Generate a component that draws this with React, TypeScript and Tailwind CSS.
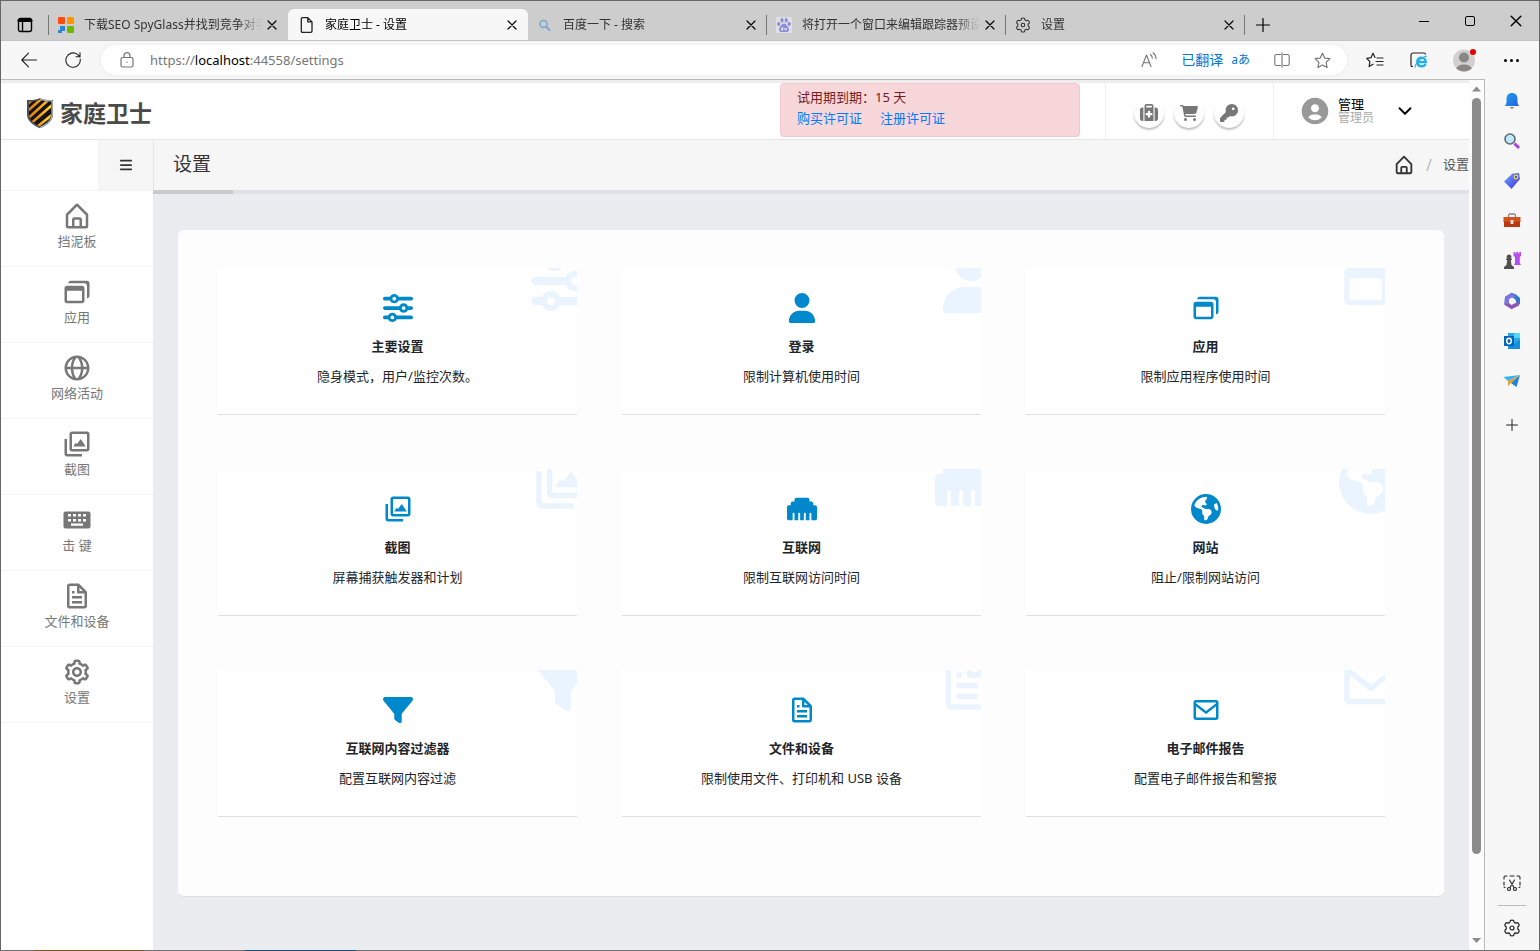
// src/App.tsx
import type { ReactNode } from "react";
import type { IconType } from "react-icons";
import { BiCog, BiEnvelope, BiFile, BiGlobe, BiImages, BiSolidUserCircle, BiWindows } from "react-icons/bi";
import {
  FaBars,
  FaCartShopping,
  FaEarthAmericas,
  FaEthernet,
  FaFilter,
  FaKey,
  FaSliders,
  FaSuitcaseMedical,
  FaUser,
} from "react-icons/fa6";
import { ChevronDown } from "lucide-react";

type IconProps = { className?: string };

const line = {
  fill: "none",
  stroke: "currentColor",
  strokeLinecap: "round" as const,
  strokeLinejoin: "round" as const,
};

const HomeIcon = ({ className }: IconProps) => (
  <svg viewBox="0 0 24 24" className={className} fill="currentColor" aria-hidden="true">
    <path d="M5 22h14a2 2 0 0 0 2-2v-9a1 1 0 0 0-.29-.71l-8-8a1 1 0 0 0-1.41 0l-8 8A1 1 0 0 0 3 11v9a2 2 0 0 0 2 2zm5-2v-5h4v5zm-5-8.59 7-7 7 7V20h-3v-5a2 2 0 0 0-2-2h-4a2 2 0 0 0-2 2v5H5z" />
  </svg>
);

const KeyboardIcon = ({ className }: IconProps) => (
  <svg viewBox="-1.5 -6.5 30 30" className={className} aria-hidden="true">
    <rect width="27" height="17" rx="2" fill="currentColor" />
    <path
      d="M4.5 2.5h3V5h-3zM9.5 2.5h3V5h-3zM14.5 2.5h3V5h-3zM19.5 2.5h3V5h-3zM4.5 7.5h3V10h-3zM9.5 7.5h3V10h-3zM14.5 7.5h3V10h-3zM19.5 7.5h3V10h-3zM7.5 12h12v2.2h-12z"
      fill="#fff"
    />
  </svg>
);

const GearIcon = ({ className }: IconProps) => (
  <svg viewBox="0 0 18 18" className={className} {...line} strokeWidth="1.2" aria-hidden="true">
    <path d="M7.3 1.6c.5-.7 2.9-.7 3.4 0l.5 1.8 1.3.7 1.9-.5c.9.2 2 2.2 1.7 3L14.8 8v2l1.3 1.4c.3.8-.8 2.8-1.7 3l-1.9-.5-1.3.7-.5 1.8c-.5.7-2.9.7-3.4 0l-.5-1.8-1.3-.7-1.9.5c-.9-.2-2-2.2-1.7-3L3.200 10V8L1.900 6.600c-.3-.8.8-2.8 1.700-3l1.900.5 1.300-.7z" />
    <circle cx="9" cy="9" r="2" />
  </svg>
);

const ShieldLogo = () => (
  <svg viewBox="0 0 28 32" className="w-7 h-8 shrink-0" aria-hidden="true">
    <defs>
      <linearGradient id="shieldGold" x1="0" x2="28" gradientUnits="userSpaceOnUse">
        <stop offset="0" stopColor="#d9730a" />
        <stop offset=".55" stopColor="#f2a61c" />
        <stop offset="1" stopColor="#ffe94a" />
      </linearGradient>
      <clipPath id="shieldClip">
        <path d="M14 2.5c3 1.5 7 2.2 11 2v12c0 6-4 9.500-11 13-7-3.500-11-7-11-13v-12c4 .2 8-.5 11-2z" />
      </clipPath>
    </defs>
    <path d="M14 1c3 1.600 8 2.400 13 2v14c0 7-5 10.500-13 14.300C6 27.500 1 24 1 17V3c5 .4 10-.4 13-2z" fill="#4a4f58" />
    <g clipPath="url(#shieldClip)">
      <path d="M0 0h28v32H0z" fill="#15120f" />
      <path d="M-4 12 14-4M-4 19 22-4M-2 25 30-4M2 29 32 3M7 33 36 10" stroke="url(#shieldGold)" strokeWidth="2.6" />
    </g>
    <path d="M14 1.800c3 1.500 7.500 2.300 12.200 2v13c0 6.600-4.500 10-12.200 13.700" fill="none" stroke="#c9ced6" strokeWidth="1" />
  </svg>
);

const CloseIcon = ({ className }: IconProps) => (
  <svg viewBox="0 0 10 10" className={className} {...line} strokeWidth="1.2" aria-hidden="true">
    <path d="M1 1l8 8M9 1 1 9" />
  </svg>
);

const tileLogo = (
  <svg viewBox="0 0 16 16" className="size-4 shrink-0" aria-hidden="true">
    <rect width="7" height="7" rx="1" fill="#ff4b0b" />
    <rect x="9" width="7" height="7" rx="1" fill="#ff9500" />
    <rect x="9" y="9" width="7" height="7" rx="1" fill="#6fba00" />
    <path d="M2 9h5v5H4v2H0v-3h2z" fill="#2b88d8" />
  </svg>
);

const pageLogo = (
  <svg viewBox="0 0 16 16" className="size-4 shrink-0" {...line} stroke="#222" strokeWidth="1.3" aria-hidden="true">
    <path d="M3.500.7h5.300L13 4.900v9.200c0 .7-.5 1.200-1.200 1.200H3.500c-.7 0-1.200-.5-1.200-1.200V1.900C2.300 1.200 2.800.7 3.500.7zM8.800.7v4.200H13" />
  </svg>
);

const searchLogo = (
  <svg viewBox="0 0 16 16" className="size-4 shrink-0" {...line} stroke="#7ba7cf" strokeWidth="1.5" aria-hidden="true">
    <circle cx="6.500" cy="7" r="3.500" />
    <path d="m9.500 10 3 3" strokeWidth="2" />
  </svg>
);

const pawLogo = (
  <svg viewBox="0 0 16 16" className="size-4 shrink-0" aria-hidden="true">
    <rect width="16" height="16" rx="1" fill="#e0e0e4" />
    <g fill="#8a8bdc">
      <ellipse cx="2.800" cy="7" rx="1.600" ry="2.100" />
      <ellipse cx="6" cy="3.300" rx="1.500" ry="2.200" />
      <ellipse cx="10.200" cy="3.300" rx="1.500" ry="2.200" />
      <ellipse cx="13.200" cy="7" rx="1.600" ry="2.100" />
      <path d="M8 6.500c2 0 2.500 2 4 3.500s1.500 5-1.300 5H5.300C2.500 15 2.500 11.500 4 10s2-3.500 4-3.500z" />
    </g>
    <path d="M6.700 10v3H5.600a.8.8 0 1 1 1.100-1.500M8.800 11v1.300c0 .9 1.700.9 1.700 0V11" fill="none" stroke="#fff" strokeWidth=".8" />
  </svg>
);

type Tab = { title: string; icon: ReactNode; active?: boolean; divider?: boolean };

const tabs: Tab[] = [
  { title: "下载SEO SpyGlass并找到竞争对手", icon: tileLogo },
  { title: "家庭卫士 - 设置", icon: pageLogo, active: true },
  { title: "百度一下 - 搜索", icon: searchLogo, divider: true },
  { title: "将打开一个窗口来编辑跟踪器预设", icon: pawLogo, divider: true },
  { title: "设置", icon: <GearIcon className="size-4 shrink-0" />, divider: true },
];

const TabBar = () => (
  <div className="flex h-10 bg-[#cdcdcd] border-b border-[#c2c2c2] text-xs text-black">
    <button aria-label="标签操作" className="w-[47px] pt-2 flex items-center justify-center">
      <svg viewBox="0 0 16 16" className="size-4" {...line} strokeWidth="1.4" aria-hidden="true">
        <rect x="1.500" y="1.500" width="13" height="13" rx="2" />
        <path d="M2 3.500h12" strokeWidth="3" />
        <path d="M5.500 5v9" />
      </svg>
    </button>
    <span className="w-px h-5 mt-[14px] bg-[#777]" />
    <div className="flex min-w-0 pt-2">
      {tabs.map((tab) => (
        <div
          key={tab.title}
          className={
            tab.active
              ? "w-60 pl-[11px] pr-[6px] flex items-center bg-[#f7f7f7] rounded-t-md"
              : "w-[239px] pl-[9px] flex items-center text-[#333]"
          }
        >
          <div className="flex items-center gap-2 grow min-w-0">
            {tab.icon}
            <span className="grow whitespace-nowrap overflow-hidden pl-[2px] [mask-image:linear-gradient(to_right,black_86%,transparent)]">
              {tab.title}
            </span>
            <button aria-label="关闭标签" className="size-5 -ml-2 flex items-center justify-center shrink-0 text-black">
              <CloseIcon className="size-[10px]" />
            </button>
          </div>
          {!tab.active && <span className={tab.divider ? "w-px h-5 ml-[5px] bg-[#777]" : "w-px ml-[5px]"} />}
        </div>
      ))}
    </div>
    <button aria-label="新建标签" className="w-9 pt-2 flex items-center justify-center">
      <svg viewBox="0 0 14 14" className="size-[14px]" {...line} strokeWidth="1.2" aria-hidden="true">
        <path d="M7 .5v13M.5 7h13" />
      </svg>
    </button>
    <div className="ml-auto flex h-10">
      <button aria-label="最小化" className="w-[46px] flex items-center justify-center">
        <span className="w-[10px] h-px bg-black" />
      </button>
      <button aria-label="最大化" className="w-[46px] flex items-center justify-center">
        <span className="size-[10px] border border-black rounded-xs" />
      </button>
      <button aria-label="关闭" className="w-[46px] flex items-center justify-center">
        <CloseIcon className="size-3" />
      </button>
    </div>
  </div>
);

const AddressBar = () => (
  <div className="flex items-center h-[38px] bg-[#f7f7f7] text-[#222]">
    <button aria-label="返回" className="w-14 flex justify-center">
      <svg viewBox="0 0 16 16" className="size-4" {...line} strokeWidth="1.1" aria-hidden="true">
        <path d="M15.500 8H.8M7.500 1.200.8 8l6.700 6.800" />
      </svg>
    </button>
    <button aria-label="刷新" className="w-8 flex justify-center">
      <svg viewBox="0 0 16 16" className="size-4" {...line} strokeWidth="1.1" aria-hidden="true">
        <path d="M15.200 7A7.200 7.200 0 1 1 12.500 2.400L15 4.800M15 .8v4h-4" />
      </svg>
    </button>
    <div className="flex items-center grow h-[30px] ml-3 pl-[19px] pr-4 bg-white rounded-full text-[#767676] shadow-[0_0_4px_rgba(0,0,0,0.06)]">
      <svg viewBox="0 0 14 16" className="w-[14px] h-4" {...line} strokeWidth="1.2" aria-hidden="true">
        <rect x="1" y="5.500" width="12" height="9.500" rx="1.500" />
        <path d="M4 5.500V3.700a3 3 0 0 1 6 0v1.800M7 10.200v.1" />
      </svg>
      <p className="ml-4 grow pt-px text-[13px] font-['Noto_Sans','Noto_Sans_CJK_SC',sans-serif]">
        https://<span className="text-black">localhost</span>:44558/settings
      </p>
      <svg viewBox="0 0 16 16" className="size-4" {...line} strokeWidth="1.1" aria-hidden="true">
        <path d="M1 14.500 5.500 3 10 14.500M2.500 10.700h6M9.500 2.500c1.300 1 1.800 2.300 1.800 3.700M12 .8c2 1.500 3 3.600 3 6" />
      </svg>
      <span className="ml-6 text-sm text-[#0078d4]">已翻译</span>
      <span className="ml-2 text-xs text-[#0078d4]">aあ</span>
      <svg viewBox="0 0 16 16" className="size-4 ml-6" {...line} strokeWidth="1.1" aria-hidden="true">
        <path d="M6.500 2.500h-4C1.500 2.500.8 3.200.8 4v8c0 .8.7 1.500 1.700 1.500h4M9.500 2.500h4c1 0 1.700.7 1.700 1.500v8c0 .8-.7 1.500-1.700 1.500h-4M8 .8v14.400" />
      </svg>
      <svg viewBox="0 0 16 16" className="size-[17px] ml-6" {...line} strokeWidth="1.1" aria-hidden="true">
        <path d="M8 1.200l2.100 4.500 4.900.6-3.600 3.400.9 4.900L8 12.200l-4.300 2.400.9-4.900L1 6.300l4.900-.6z" />
      </svg>
    </div>
    <button aria-label="收藏夹" className="w-8 ml-3 flex justify-center">
      <svg viewBox="0 0 18 16" className="w-[18px] h-4" {...line} strokeWidth="1.2" aria-hidden="true">
        <path d="M9 5.500 7 1.200 5 5.700l-4.300.6 3.200 3.400-.8 4.900L7 12.200M11 6h6M10 9.500h7M11 13h6" />
      </svg>
    </button>
    <button aria-label="IE 模式" className="w-14 flex justify-center">
      <svg viewBox="0 0 18 18" className="size-[18px]" fill="none" aria-hidden="true">
        <path d="M3 15.500H2a1 1 0 0 1-1-1V4a2 2 0 0 1 2-2h11a1.500 1.500 0 0 1 1.500 1.500" stroke="#222" strokeWidth="1.2" />
        <path d="M15.500 13c-1.700 3.700-8.300 3-8.300-2.200 0-5.600 8.600-5.700 8.600.4H7.600" stroke="#1fb0ea" strokeWidth="2.3" />
        <path d="M5.500 16.500C3.500 14.500 12 5.500 17 5" stroke="#1fb0ea" strokeWidth="1.1" />
      </svg>
    </button>
    <button aria-label="个人资料" className="w-9 flex justify-center">
      <svg viewBox="0 0 26 24" className="w-[26px] h-6" aria-hidden="true">
        <clipPath id="profileClip">
          <circle cx="12" cy="12.500" r="11" />
        </clipPath>
        <g clipPath="url(#profileClip)">
          <path d="M0 0h26v24H0z" fill="#d2d0ce" />
          <circle cx="12" cy="9.500" r="5" fill="#8a8886" />
          <ellipse cx="12" cy="21.500" rx="8" ry="5" fill="#8a8886" />
        </g>
        <circle cx="21" cy="4" r="3" fill="#e60000" />
      </svg>
    </button>
    <button aria-label="更多" className="w-14 flex items-center justify-center gap-[3px]">
      <span className="size-[3px] rounded-full bg-black" />
      <span className="size-[3px] rounded-full bg-black" />
      <span className="size-[3px] rounded-full bg-black" />
    </button>
  </div>
);

const menu: { label: string; icon: IconType | typeof HomeIcon }[] = [
  { label: "挡泥板", icon: HomeIcon },
  { label: "应用", icon: BiWindows },
  { label: "网络活动", icon: BiGlobe },
  { label: "截图", icon: BiImages },
  { label: "击 键", icon: KeyboardIcon },
  { label: "文件和设备", icon: BiFile },
  { label: "设置", icon: BiCog },
];

const cards: { title: string; text: string; icon: IconType }[] = [
  { title: "主要设置", text: "隐身模式，用户/监控次数。", icon: FaSliders },
  { title: "登录", text: "限制计算机使用时间", icon: FaUser },
  { title: "应用", text: "限制应用程序使用时间", icon: BiWindows },
  { title: "截图", text: "屏幕捕获触发器和计划", icon: BiImages },
  { title: "互联网", text: "限制互联网访问时间", icon: FaEthernet },
  { title: "网站", text: "阻止/限制网站访问", icon: FaEarthAmericas },
  { title: "互联网内容过滤器", text: "配置互联网内容过滤", icon: FaFilter },
  { title: "文件和设备", text: "限制使用文件、打印机和 USB 设备", icon: BiFile },
  { title: "电子邮件报告", text: "配置电子邮件报告和警报", icon: BiEnvelope },
];

const actions: { label: string; icon: IconType }[] = [
  { label: "支持", icon: FaSuitcaseMedical },
  { label: "购买", icon: FaCartShopping },
  { label: "许可证", icon: FaKey },
];

const PageHeader = () => (
  <header className="flex h-[57px] bg-white border-b border-[#e5e5e5]">
    <a href="#home" className="flex items-center gap-[6px] pl-[25px] pt-1">
      <ShieldLogo />
      <span className="text-[23px] font-bold text-[#4a4a4a]">家庭卫士</span>
    </a>
    <div className="ml-auto mr-[25px] w-[300px] h-[54px] px-4 pt-[3px] bg-[#f8d7da] border border-[#f5c6cb] rounded-sm text-[13px] leading-[21px] text-[#721c24]">
      <p>试用期到期：15 天</p>
      <p className="flex gap-[18px] text-[#007bff]">
        <a href="#buy">购买许可证</a>
        <a href="#register">注册许可证</a>
      </p>
    </div>
    <div className="flex items-center gap-[10px] w-[168px] pl-7 pt-1 border-l border-[#f0f0f0]">
      {actions.map(({ label, icon: Icon }) => (
        <button
          key={label}
          aria-label={label}
          className="size-[30px] rounded-full bg-white text-[#777] flex items-center justify-center shadow-[0_2px_2px_rgba(0,0,0,0.25)]"
        >
          <Icon className="size-[18px]" />
        </button>
      ))}
    </div>
    <div className="flex items-center w-[196px] pl-6 border-l border-[#f0f0f0]">
      <BiSolidUserCircle className="size-8 ml-px text-[#999]" />
      <div className="ml-[7px] grow">
        <p className="text-[13px] leading-[14px] text-black">管理</p>
        <p className="text-xs leading-[14px] text-[#aaa]">管理员</p>
      </div>
      <button aria-label="展开用户菜单" className="mr-[53px]">
        <ChevronDown className="size-[22px] text-black" />
      </button>
    </div>
  </header>
);

const SettingsPage = () => (
  <div className="grow min-w-0 flex flex-col bg-white border-t-3 border-[#eee]">
    <PageHeader />
    <div className="flex grow min-h-0">
      <nav className="w-[152px] shrink-0 bg-white text-[#777]">
        <div className="flex justify-end h-[51px] border-b border-[#f6f6f6]">
          <button aria-label="菜单" className="w-[55px] bg-[#f6f6f6] flex items-center justify-center text-[#333]">
            <FaBars className="size-[14px]" />
          </button>
        </div>
        {menu.map(({ label, icon: Icon }) => (
          <a
            key={label}
            href={`#${label}`}
            className="flex flex-col items-center h-[76px] pt-[10px] border-b border-[#f6f6f6] text-[13px] leading-5"
          >
            <Icon className="size-[30px]" />
            {label}
          </a>
        ))}
      </nav>

      <main className="grow min-w-0 bg-[#ebecf0] overflow-hidden">
        <div className="flex items-center justify-between h-[50px] pl-[19px] bg-[#f6f6f6] border-l border-[#e5e5e5]">
          <h1 className="pb-[2px] text-[19px] text-[#333]">设置</h1>
          <div className="flex items-center text-[13px] text-[#555]">
            <a href="#home" aria-label="首页">
              <HomeIcon className="size-[22px] text-[#333]" />
            </a>
            <span className="w-7 text-center text-base text-[#bbb]">/</span>
            <span>设置</span>
          </div>
        </div>
        <div className="h-1 bg-[#e1e2e7]">
          <div className="w-20 h-1 bg-[#cacaca]" />
        </div>

        <section className="mt-9 mx-[25px] pt-[38px] pl-10 pr-[59px] pb-[79px] bg-[#fdfdfd] border-b border-[#dfe0e3] rounded-md">
          <div className="grid grid-cols-3 gap-x-[45px] gap-y-[54px]">
            {cards.map(({ title, text, icon: Icon }) => (
              <a
                key={title}
                href={`#${title}`}
                className="relative overflow-hidden flex flex-col items-center pt-[25px] pb-7 bg-white border-b border-[#e0e0e0] text-[13px] leading-5 text-[#212529]"
              >
                <Icon
                  className={`absolute -top-[19px] h-16 w-auto text-[#e9f4ff] ${
                    Icon === FaUser ? "-right-[22px]" : "-right-[18px]"
                  }`}
                />
                <Icon className="h-[30px] w-auto text-[#0088cc]" />
                <h2 className="mt-[13px] font-bold">{title}</h2>
                <p className="mt-[10px]">{text}</p>
              </a>
            ))}
          </div>
        </section>
      </main>
    </div>
  </div>
);

const ScrollBar = () => (
  <div className="w-[15px] shrink-0 flex flex-col items-center bg-[#fcfcfc]" aria-hidden="true">
    <svg viewBox="0 0 9 18" className="w-[9px] h-[18px]" fill="#8b8b8b">
      <path d="M0 11.500h9L4.500 6.500z" />
    </svg>
    <div className="grow-[907] w-[9px] rounded-full bg-[#8b8b8b]" />
    <div className="grow-[93]" />
    <svg viewBox="0 0 9 18" className="w-[9px] h-[18px]" fill="#8b8b8b">
      <path d="M0 6h9l-4.500 5z" />
    </svg>
  </div>
);

const sideApps: { label: string; art: ReactNode }[] = [
  {
    label: "通知",
    art: (
      <>
        <path d="M9 1c3.500 0 5.500 2.600 5.500 6v4l1.500 3H2l1.500-3V7C3.500 3.600 5.500 1 9 1z" fill="url(#edgeBell)" />
        <path d="M7 15.300h4c-.3 1.600-3.700 1.600-4 0z" fill="#666" />
      </>
    ),
  },
  {
    label: "搜索",
    art: (
      <>
        <path d="m11.500 11.500 4.500 4.500" stroke="#b43cf0" strokeWidth="3" />
        <circle cx="7" cy="7" r="5" fill="#bfe8fb" stroke="#5d6a70" strokeWidth="1.6" />
      </>
    ),
  },
  {
    label: "购物",
    art: (
      <>
        <path d="M9.500 1.500 16 1l1 6-8.500 10L1 9.500z" fill="url(#edgeTag)" />
        <circle cx="13" cy="5" r="1.800" fill="#3b55d8" stroke="#ffd12e" strokeWidth="1.3" />
      </>
    ),
  },
  {
    label: "工具",
    art: (
      <>
        <path d="M5.500 5V3.500C5.500 2.500 6 2 7 2h4c1 0 1.500.5 1.500 1.500V5" fill="none" stroke="#888" strokeWidth="1.3" />
        <path d="M.5 5h17v5H.5z" fill="#d8531c" />
        <path d="M1 9.500h16V15H1z" fill="#b93a12" />
        <path d="M7.500 8h3v4h-3z" fill="#ddd" />
      </>
    ),
  },
  {
    label: "游戏",
    art: (
      <>
        <path d="M10.500 0h1.800v1.500h1V0h2v1.500h1V0H18v4l-1.200 1v6l1.200 2h-7l1-2V5l-1.500-1z" fill="#b94cf2" />
        <path d="M6 2.500a2.500 2.500 0 0 1 1.700 4.300H9V8H7.800l.7 5L11 15v2H1v-2l2.500-2 .7-5H3V6.800h1.300A2.500 2.500 0 0 1 6 2.500z" fill="#505050" />
      </>
    ),
  },
  {
    label: "Microsoft 365",
    art: (
      <>
        <path d="m8.500.8 4.500 1.700 4 3.500v6l-3 1.500-1.500-6L5 4.500z" fill="#2c78c9" />
        <path d="M8.500.8 2 4.500 1 12.500l5-1 .5-4L13 5z" fill="#7c75e0" />
        <path d="m1 12.500 7.500 4.700 7.500-3.700V10l-5 1.500L8.500 13 6 11z" fill="#8d57b8" />
        <path d="m9 5.600 3 1.700v3.400l-3 1.700-3-1.700V7.300z" fill="#f7f7f7" />
      </>
    ),
  },
  {
    label: "Outlook",
    art: (
      <>
        <path d="M5 1h12v15H5z" fill="#28a8ea" />
        <path d="M11 1h6v5h-6z" fill="#50d9ff" />
        <path d="m5 9 6 3 6-4v9H5z" fill="#1490df" />
        <path d="M1 4h10v10H1z" fill="#0364b8" />
        <ellipse cx="6" cy="9" rx="2.300" ry="2.700" fill="none" stroke="#fff" strokeWidth="1.5" />
      </>
    ),
  },
  {
    label: "发送",
    art: (
      <>
        <path d="M17 3 .5 5 5 9z" fill="#36b3f5" />
        <path d="M17 3 5 9v5l3-3z" fill="#f09c1d" />
        <path d="m17 3-9 8 5.500 4z" fill="#1f82e0" />
      </>
    ),
  },
];

const EdgeSidebar = () => (
  <aside className="w-[54px] shrink-0 flex flex-col items-center pt-[2px] pb-[13px] bg-[#f7f7f7] text-[#222]">
    <svg className="size-0" aria-hidden="true">
      <linearGradient id="edgeBell" x2="1" y2="1">
        <stop stopColor="#1aa0e8" />
        <stop offset="1" stopColor="#2b62e8" />
      </linearGradient>
      <linearGradient id="edgeTag" x2="1" y2="1">
        <stop stopColor="#6aa8ff" />
        <stop offset="1" stopColor="#4434e0" />
      </linearGradient>
    </svg>
    {sideApps.map((app) => (
      <button key={app.label} aria-label={app.label} className="h-10 w-full flex items-center justify-center">
        <svg viewBox="0 0 18 18" className="size-[18px]" aria-hidden="true">
          {app.art}
        </svg>
      </button>
    ))}
    <button aria-label="添加" className="h-12 w-full flex items-center justify-center">
      <svg viewBox="0 0 12 12" className="size-3" {...line} aria-hidden="true">
        <path d="M6 .5v11M.5 6h11" />
      </svg>
    </button>
    <button aria-label="截屏" className="mt-auto">
      <svg viewBox="0 0 18 18" className="size-[18px]" {...line} strokeWidth="1.1" aria-hidden="true">
        <path d="M1 5V3.500C1 2.500 1.500 2 2.500 2H4M7 2h4M14 2h1.500c1 0 1.500.5 1.500 1.500V5M1 8v3M17 8v3M1 13l1 .5M17 13l-1 .5M6.500 6l4.500 7.500M11.500 6 7 13.500" />
        <circle cx="6" cy="15" r="1.500" />
        <circle cx="12" cy="15" r="1.500" />
      </svg>
    </button>
    <span className="w-7 h-px my-[13px] bg-[#bbb]" />
    <button aria-label="侧栏设置">
      <GearIcon className="size-[18px]" />
    </button>
  </aside>
);

const App = () => (
  <div className="h-screen flex flex-col overflow-hidden bg-[#f7f7f7] font-['Noto_Sans','Noto_Sans_CJK_SC',sans-serif]">
    <div className="grow min-h-0 flex flex-col border-t border-x border-[#666]">
      <TabBar />
      <AddressBar />
      <div className="flex grow min-h-0">
        <div className="grow min-w-0 flex border-t border-r border-[#bababa]">
          <SettingsPage />
          <ScrollBar />
        </div>
        <EdgeSidebar />
      </div>
    </div>
    <div className="flex h-px shrink-0 bg-[#707070]">
      <span className="ml-[34px] w-[110px] bg-[#7a5a1a]" />
      <span className="ml-[101px] w-[111px] bg-[#15507c]" />
    </div>
  </div>
);

export default App;
